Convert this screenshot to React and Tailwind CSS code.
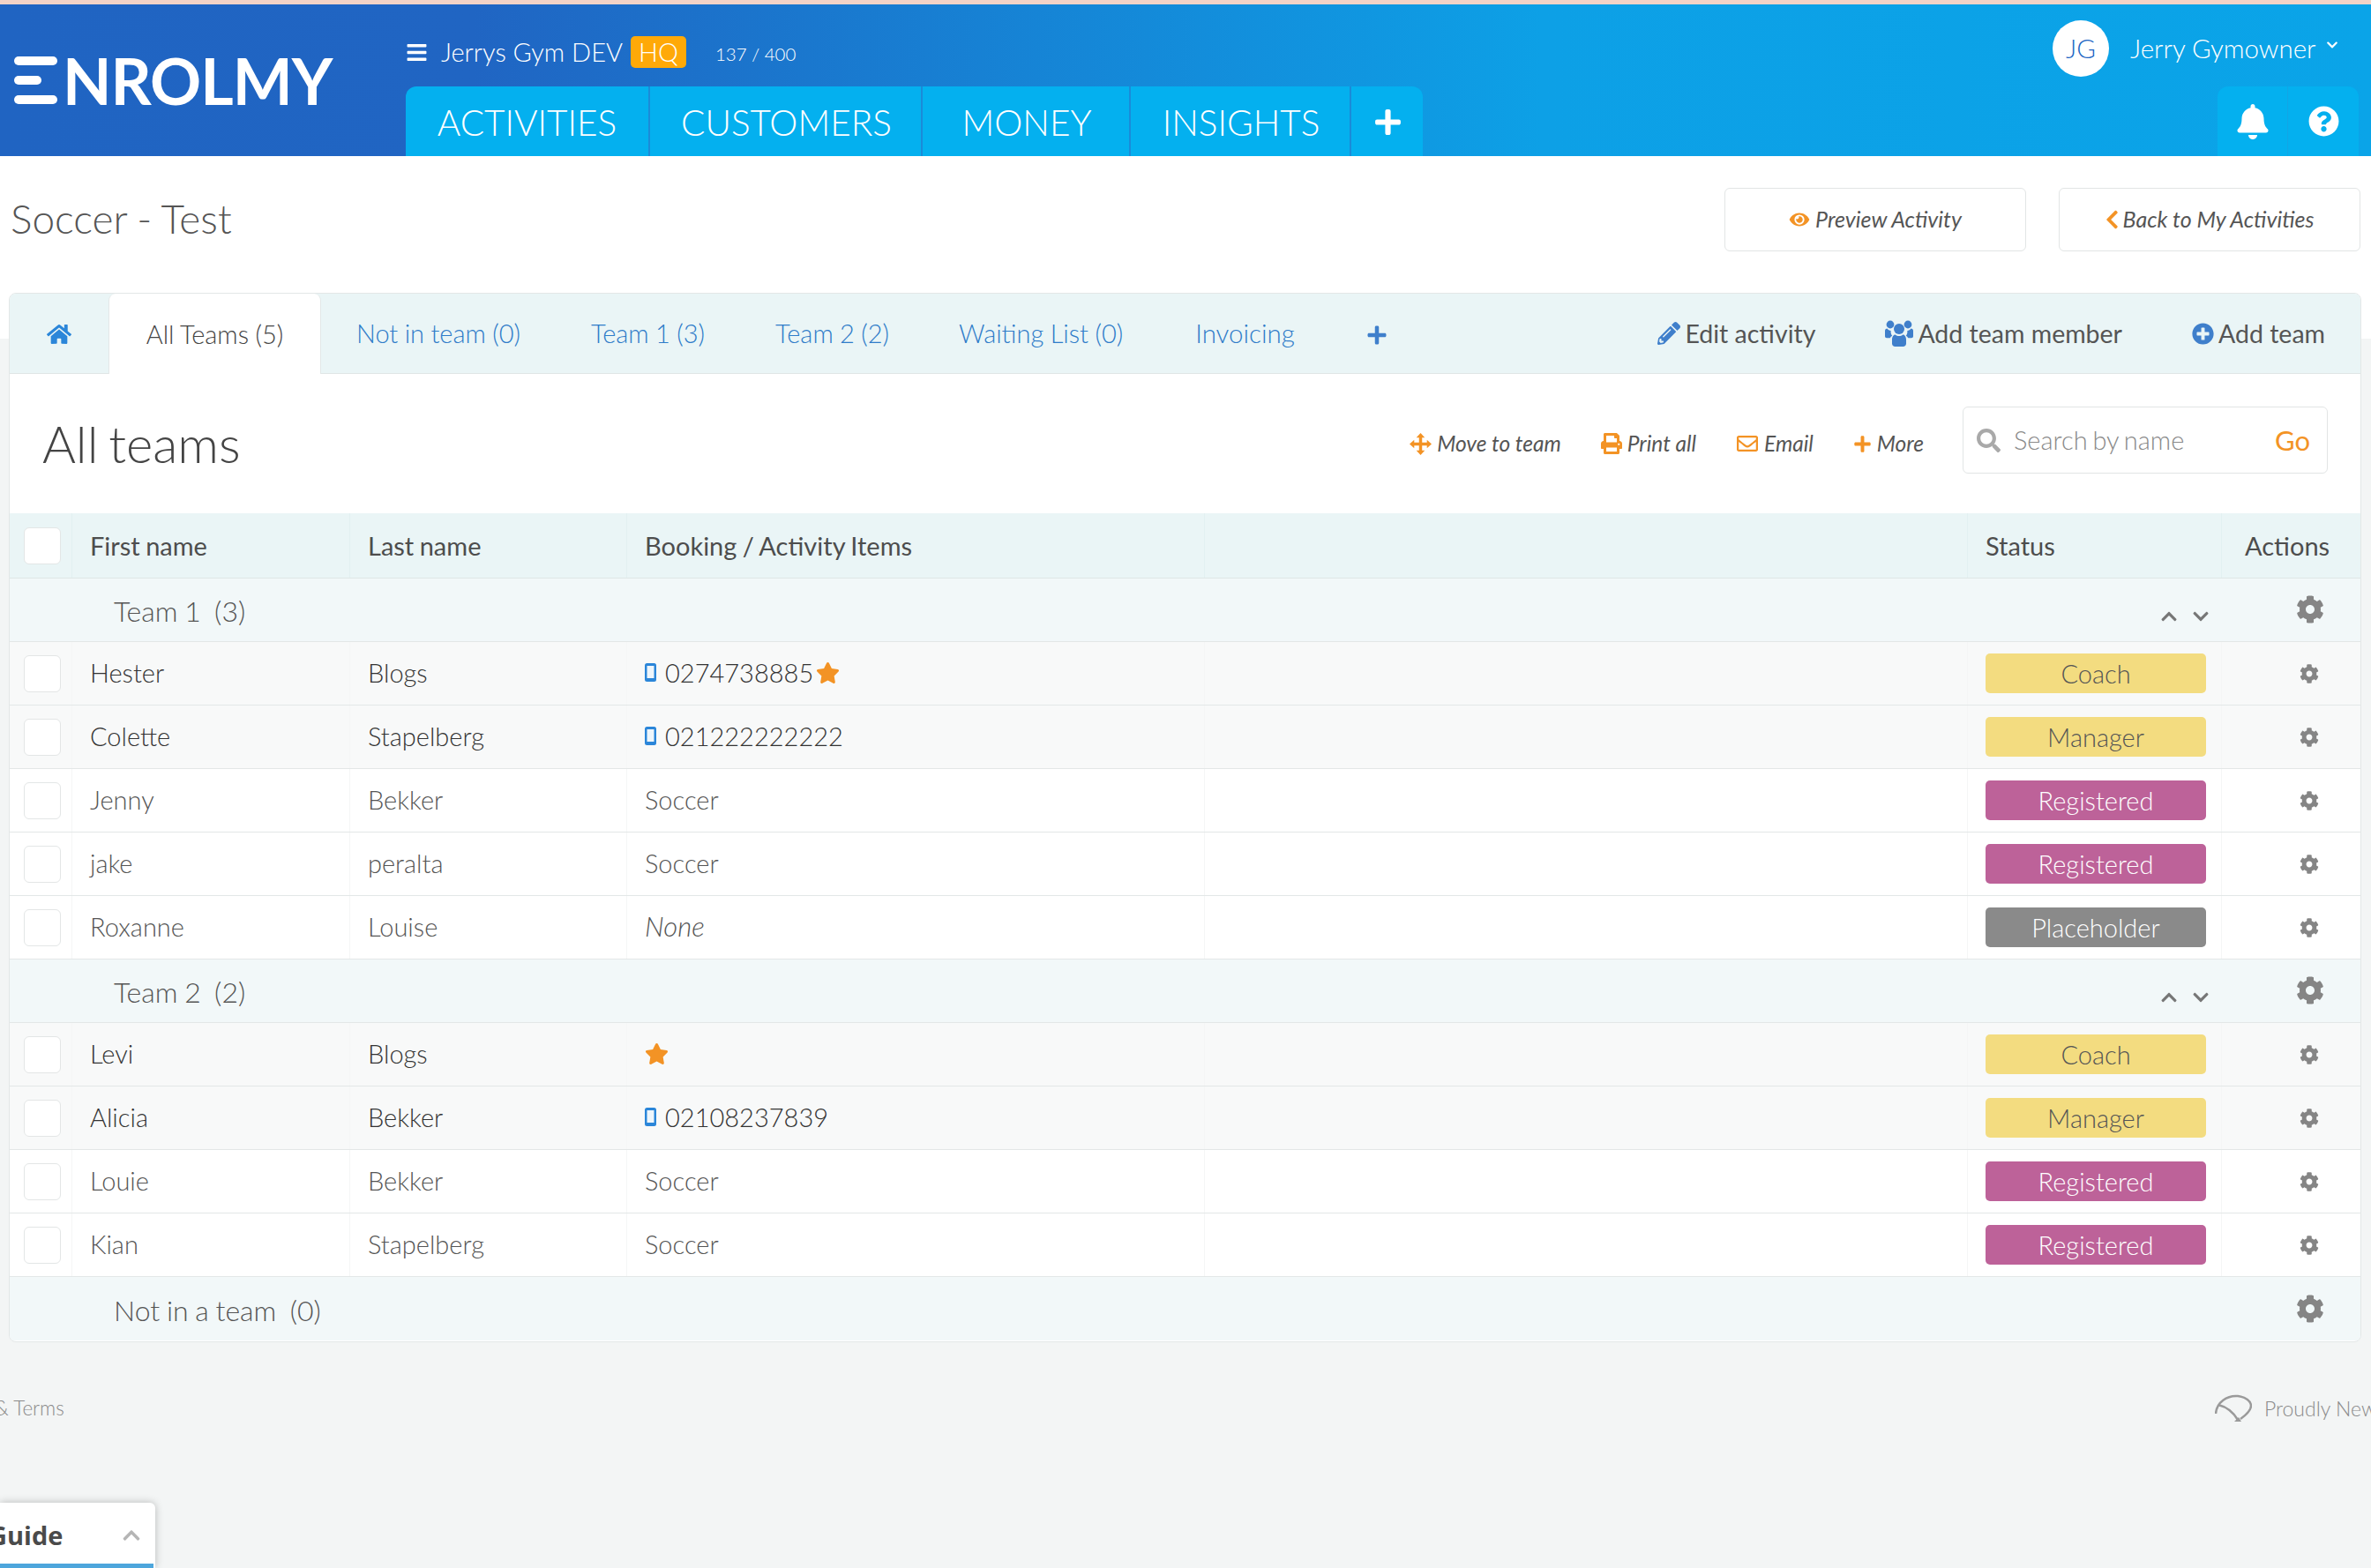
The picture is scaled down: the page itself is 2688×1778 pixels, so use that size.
import React from 'react';
import {
  FaBars, FaBell, FaChevronDown, FaChevronLeft, FaChevronUp, FaCog, FaEye, FaHome,
  FaPencilAlt, FaPlus, FaPlusCircle, FaPrint, FaQuestionCircle, FaRegEnvelope, FaSearch, FaStar,
} from 'react-icons/fa';

const GRID = 'grid grid-cols-[71px_315px_314px_655px_865px_288px_1fr]';

const BADGES = {
  Coach: 'bg-[#f3dc80] text-[#555555]',
  Manager: 'bg-[#f3dc80] text-[#555555]',
  Registered: 'bg-[#bd6299] text-white',
  Placeholder: 'bg-[#8a8a8a] text-white',
};

const TEAM_ONE = [
  { first: 'Hester', last: 'Blogs', phone: '0274738885', star: true, status: 'Coach' },
  { first: 'Colette', last: 'Stapelberg', phone: '021222222222', status: 'Manager' },
  { first: 'Jenny', last: 'Bekker', item: 'Soccer', status: 'Registered' },
  { first: 'jake', last: 'peralta', item: 'Soccer', status: 'Registered' },
  { first: 'Roxanne', last: 'Louise', item: 'None', status: 'Placeholder' },
];

const TEAM_TWO = [
  { first: 'Levi', last: 'Blogs', star: true, status: 'Coach' },
  { first: 'Alicia', last: 'Bekker', phone: '02108237839', status: 'Manager' },
  { first: 'Louie', last: 'Bekker', item: 'Soccer', status: 'Registered' },
  { first: 'Kian', last: 'Stapelberg', item: 'Soccer', status: 'Registered' },
];

// fa-mobile from the old icon font, react-icons only has the newer shape
function PhoneIcon() {
  return (
    <svg viewBox="0 0 13 21" className="w-[13px] h-[21px] mr-[10px] shrink-0">
      <rect width="13" height="21" rx="2.5" fill="#2b86d9" />
      <rect x="2.500" y="3" width="8" height="14" fill="#eef6fc" />
    </svg>
  );
}

function UsersIcon() {
  return (
    <svg viewBox="0 0 32 30" className="w-[32px] h-[30px] shrink-0" fill="#3f7fcb">
      <circle cx="6" cy="5" r="4.4" />
      <circle cx="26" cy="5" r="4.4" />
      <circle cx="16" cy="10" r="6" />
      <path d="M0 12c0-1.500 1-2.400 2.500-2.400 1 1.400 2.500 2.300 4.200 2.300-.4 1.900.2 4.300 1.500 5.800-1 .6-1.900 1.400-2.500 2.500H2c-1.200 0-2-.8-2-2zM32 12c0-1.500-1-2.400-2.500-2.400-1 1.400-2.500 2.300-4.200 2.300.4 1.900-.2 4.300-1.500 5.800 1 .6 1.900 1.400 2.500 2.500H30c1.200 0 2-.8 2-2z" />
      <path d="M8 22c0-3.500 2-5.500 3.800-5.500 1.100 1 2.600 1.500 4.200 1.500s3.100-.5 4.200-1.500C22 16.500 24 18.500 24 22v4.500c0 2-1.500 3.500-3.500 3.500h-9C9.500 30 8 28.500 8 26.500z" />
    </svg>
  );
}

function MoveIcon() {
  return (
    <svg viewBox="0 0 26 26" className="w-[25px] h-[25px]" fill="currentColor">
      <path d="M13 0l5 5.500h-3.200v5.700h5.700V8L26 13l-5.500 5v-3.200h-5.700v5.700H18L13 26l-5-5.500h3.200v-5.700H5.500V18L0 13l5.500-5v3.200h5.700V5.500H8z" />
    </svg>
  );
}

function Checkbox() {
  return <span className="block w-[42px] h-[42px] rounded-[6px] border border-[#e3e6e6] bg-white" />;
}

function GroupRow({ name, count, arrows = true, last = false }) {
  return (
    <div className={`${GRID} h-[72px] bg-[#f2f8f9] items-center ${last ? '' : 'border-b border-[#e3e7e7]'}`}>
      <div className="col-span-5 pl-[118px] pt-[3px] text-[32px] font-light text-[#555555] [word-spacing:-1px]">
        {name}&nbsp; ({count})
      </div>
      <div className="flex justify-end gap-[16px] pr-[14px] pt-[14px] text-[#777777]">
        {arrows && <FaChevronUp className="w-[20px] h-[20px]" />}
        {arrows && <FaChevronDown className="w-[20px] h-[20px]" />}
      </div>
      <div className="flex justify-center pl-[42px] pb-[1px] text-[#858585]">
        <FaCog className="w-[32px] h-[32px]" />
      </div>
    </div>
  );
}

function MemberRow({ first, last, phone, star, item, status }) {
  const tinted = Boolean(phone || star);
  const textColor = tinted ? 'text-[#333333]' : 'text-[#555555]';
  const sep = 'h-full flex items-center border-r border-[#f5f6f6]';
  return (
    <div className={`${GRID} h-[72px] border-b border-[#e3e7e7] text-[29px] font-light ${textColor} ${tinted ? 'bg-[#f8f9f9]' : 'bg-white'}`}>
      <div className={`${sep} pl-[16px]`}><Checkbox /></div>
      <div className={`${sep} pl-[20px] pb-[2px]`}>{first}</div>
      <div className={`${sep} pl-[20px] pb-[2px]`}>{last}</div>
      <div className={`${sep} pl-[20px] pb-[2px]`}>
        {phone && <PhoneIcon />}
        {phone}
        {star && <FaStar className={`w-[27px] h-[26px] text-[#f39325] ${phone ? 'ml-[3px]' : ''}`} />}
        {item === 'None' ? <em className="text-[31px]">None</em> : item}
      </div>
      <div className={sep} />
      <div className={`${sep} pl-[20px]`}>
        <span className={`w-[250px] h-[45px] rounded-[5px] flex items-center justify-center ${BADGES[status]}`}>
          {status}
        </span>
      </div>
      <div className="flex items-center justify-center pl-[40px] text-[#858585]">
        <FaCog className="w-[22px] h-[22px]" />
      </div>
    </div>
  );
}

function HeaderCell({ children, className = '' }) {
  return (
    <div className={`h-full flex items-center border-r border-[#e2f0f1] ${className}`}>{children}</div>
  );
}

function ToolLink({ icon, label }) {
  return (
    <a className="flex items-center gap-[6px] text-[24.500px] italic text-[#555555]">
      <span className="text-[#f39325]">{icon}</span>
      {label}
    </a>
  );
}

export default function App() {
  return (
    <div className="relative w-[2688px] h-[1778px] overflow-hidden bg-[#f3f5f5] font-['Lato',sans-serif]">
      <div className="h-[5px] bg-[#f3d3c7]" />
      <header className="h-[172px] flex bg-[linear-gradient(90deg,#2064c2_0%,#2065c3_20%,#0da0e6_65%,#0aa4e8_100%)] text-white">
        <div className="w-[460px] shrink-0 pl-[16px] pt-[59px]">
          <div className="flex items-center h-[54px]">
            <span className="flex flex-col justify-between w-[49px] h-[54px] mr-[6px]">
              <span className="h-[10px] rounded-full bg-white" />
              <span className="h-[10px] w-[31px] rounded-full bg-white" />
              <span className="h-[10px] rounded-full bg-white" />
            </span>
            <span className="text-[72px] leading-none font-bold tracking-[-1px]">NROLMY</span>
          </div>
        </div>
        <div className="flex-1 flex flex-col">
          <div className="h-[93px] flex items-center pt-[15px] text-[29px] font-light">
            <FaBars className="w-[25px] h-[25px] mr-[15px]" />
            Jerrys Gym DEV
            <span className="ml-[9px] w-[63px] h-[36px] flex items-center justify-center rounded-[5px] bg-[#ffa908]">HQ</span>
            <span className="ml-[33px] text-[20.500px] pt-[5px]">137 / 400</span>
          </div>
          <nav className="h-[79px] flex">
            <div className="flex h-full rounded-t-[12px] bg-[#04b0ef] text-[40.500px] font-light">
              <a className="w-[277px] pt-[4px] flex items-center justify-center border-r-2 border-[#1a8bd8]">ACTIVITIES</a>
              <a className="w-[309px] pt-[4px] pl-[2px] flex items-center justify-center border-r-2 border-[#1a8bd8]">CUSTOMERS</a>
              <a className="w-[236px] pt-[4px] pl-[2px] flex items-center justify-center border-r-2 border-[#1a8bd8]">MONEY</a>
              <a className="w-[250px] pt-[4px] pl-[2px] flex items-center justify-center border-r-2 border-[#1a8bd8]">INSIGHTS</a>
              <a className="w-[81px] pt-[2px] pl-[2px] flex items-center justify-center"><FaPlus className="w-[33px] h-[33px]" /></a>
            </div>
          </nav>
        </div>
        <div className="w-[228px] shrink-0 flex flex-col items-end pr-[14px]">
          <div className="h-[93px] -ml-[133px] flex items-center self-start pt-[7px] text-[29.500px] font-light whitespace-nowrap">
            <span className="w-[64px] h-[64px] mr-[24px] rounded-full bg-white flex items-center justify-center text-[#2065c3]">JG</span>
            Jerry Gymowner
            <FaChevronDown className="w-[14px] h-[14px] ml-[12px] mb-[8px]" />
          </div>
          <div className="h-[79px] w-[160px] flex rounded-t-[12px] bg-[#04b0ef]">
            <a className="w-[80px] flex items-center justify-center border-r border-[#12a5e6]"><FaBell className="w-[38px] h-[40px]" /></a>
            <a className="w-[80px] flex items-center justify-center"><FaQuestionCircle className="w-[35px] h-[35px]" /></a>
          </div>
        </div>
      </header>

      <section className="h-[207px] bg-white pl-[12px] pr-[12px] pt-[35px] flex items-start justify-between">
        <h1 className="text-[46px] leading-[71px] font-light text-[#555555] [word-spacing:-1px]">Soccer - Test</h1>
        <div className="flex gap-[37px] pt-[1px]">
          <a className="w-[342px] h-[72px] rounded-[6px] border border-[#e2e5e5] flex items-center justify-center gap-[6px] text-[25px] italic text-[#555555]">
            <FaEye className="w-[24px] h-[20px] text-[#f39325]" />
            Preview Activity
          </a>
          <a className="w-[342px] h-[72px] rounded-[6px] border border-[#e2e5e5] flex items-center justify-center gap-[5px] text-[25px] italic text-[#555555]">
            <FaChevronLeft className="w-[15px] h-[24px] text-[#f39325]" />
            Back to My Activities
          </a>
        </div>
      </section>

      <main className="relative -mt-[52px] ml-[10px] w-[2667px] h-[1190px] rounded-[8px] border border-[#e3e7e7] bg-white overflow-hidden">
        <div className="h-[91px] flex bg-[#eaf5f6] border-b border-[#dfe6e6] text-[29px] font-light text-[#2f7cc9] [word-spacing:-0.5px]">
          <a className="w-[112px] pt-[2px] flex items-center justify-center text-[#2b86d9]"><FaHome className="w-[28px] h-[28px]" /></a>
          <a className="w-[241px] -mb-px flex items-center justify-center rounded-t-[8px] bg-white border-x border-[#e3e7e7] text-[#444444]">All Teams (5)</a>
          <a className="px-[40px] flex items-center">Not in team (0)</a>
          <a className="px-[40px] flex items-center">Team 1 (3)</a>
          <a className="px-[40px] flex items-center">Team 2 (2)</a>
          <a className="pl-[39px] pr-[42px] flex items-center">Waiting List (0)</a>
          <a className="px-[40px] flex items-center text-[29.500px]">Invoicing</a>
          <a className="pl-[41px] pr-[38px] pt-[4px] flex items-center"><FaPlus className="w-[24px] h-[24px] text-[#3f7fcb]" /></a>
          <div className="ml-auto pr-[40px] flex items-center gap-[79px] font-normal text-[28.500px] text-[#555555] [word-spacing:0px]">
            <a className="flex items-center gap-[5px]"><FaPencilAlt className="w-[26px] h-[26px] text-[#3f7fcb]" />Edit activity</a>
            <a className="flex items-center gap-[5px]"><UsersIcon />Add team member</a>
            <a className="flex items-center gap-[5px]"><FaPlusCircle className="w-[25px] h-[25px] text-[#3f7fcb]" />Add team</a>
          </div>
        </div>

        <div className="h-[158px] flex items-center pl-[37px] pr-[37px]">
          <h2 className="text-[58px] font-light text-[#444444] leading-none [word-spacing:-4px]">All teams</h2>
          <div className="ml-auto flex items-center gap-[45px]">
            <ToolLink icon={<MoveIcon />} label="Move to team" />
            <ToolLink icon={<FaPrint className="w-[24px] h-[24px]" />} label="Print all" />
            <ToolLink icon={<FaRegEnvelope className="w-[26px] h-[24px]" />} label="Email" />
            <ToolLink icon={<FaPlus className="w-[21px] h-[21px]" />} label="More" />
          </div>
          <div className="ml-[44px] mb-[8px] w-[414px] h-[76px] rounded-[6px] border border-[#e2e5e5] flex items-center pl-[15px] pr-[19px] text-[29px] font-light">
            <FaSearch className="w-[27px] h-[27px] mr-[15px] text-[#a9a9a9]" />
            <span className="text-[#8a8a8a] [word-spacing:-2px]">Search by name</span>
            <span className="ml-auto text-[31px] font-normal text-[#f39325]">Go</span>
          </div>
        </div>

        <div className={`${GRID} h-[74px] items-center bg-[#eaf5f6] border-b border-[#dfe6e6] text-[29px] text-[#4d4d4d] [word-spacing:-1px]`}>
          <HeaderCell className="pl-[16px]"><Checkbox /></HeaderCell>
          <HeaderCell className="pl-[20px]">First name</HeaderCell>
          <HeaderCell className="pl-[20px]">Last name</HeaderCell>
          <HeaderCell className="pl-[20px]">Booking / Activity Items</HeaderCell>
          <HeaderCell />
          <HeaderCell className="pl-[20px]">Status</HeaderCell>
          <div className="pl-[26px]">Actions</div>
        </div>

        <GroupRow name="Team 1" count={3} />
        {TEAM_ONE.map((m) => <MemberRow key={m.first} {...m} />)}
        <GroupRow name="Team 2" count={2} />
        {TEAM_TWO.map((m) => <MemberRow key={m.first} {...m} />)}
        <GroupRow name="Not in a team" count={0} arrows={false} last />
      </main>

      <footer className="flex justify-between pt-[58px] text-[22.500px] font-light text-[#8a8a8a] whitespace-nowrap">
        <span className="-ml-[6px]">&amp; Terms</span>
        <span className="flex items-center pl-[1px] w-[178px] overflow-visible text-[23px]">
          <svg viewBox="0 0 42 32" className="w-[42px] h-[32px] mr-[14px] shrink-0" fill="none" stroke="#9a9a9a" strokeWidth="2.500">
            <path d="M1 22C2 9 14 1 26 2c9 1 15 6 15 11 0 5-5 10-12 15" />
            <path d="M4 12c8 2 16 7 22 17" />
            <path d="M22 31l5-5 3 5z" fill="#9a9a9a" stroke="none" />
          </svg>
          Proudly New Zealand
        </span>
      </footer>

      <aside className="absolute left-0 bottom-0 w-[176px] h-[74px] bg-white rounded-tr-[6px] shadow-[0_0_10px_rgba(0,0,0,0.25)] overflow-hidden">
        <div className="h-[69px] pt-[5px] flex items-center justify-between pr-[16px]">
          <span className="-ml-[13px] font-['Open_Sans',sans-serif] text-[29px] font-bold text-[#4a4a4a]">Guide</span>
          <FaChevronUp className="w-[22px] h-[22px] text-[#b5b5b5]" />
        </div>
        <div className="h-[5px] bg-[#4da6dc] mr-[2px]" />
      </aside>
    </div>
  );
}
